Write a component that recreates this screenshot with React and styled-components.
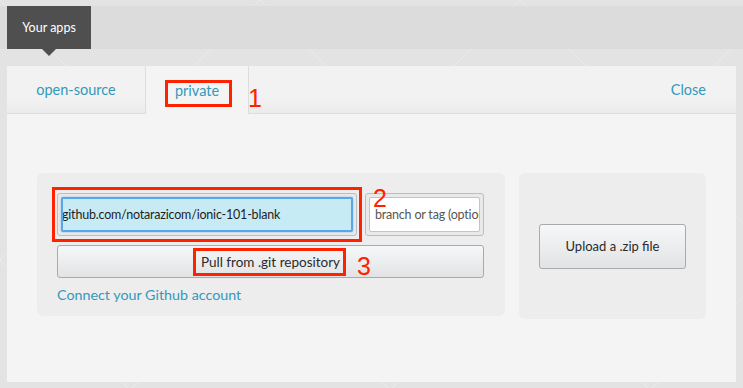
import styled, { createGlobalStyle } from "styled-components";

const GlobalStyle = createGlobalStyle`
  body {
    margin: 0;
    font-family: Lato, "Open Sans", sans-serif;
    background: #e3e3e3;
  }
`;

const Page = styled.div`
  position: relative;
  width: 743px;
  height: 388px;
  box-sizing: border-box;
  padding: 6px 7px 0;
  overflow: hidden;
  background:
    linear-gradient(135deg, transparent 49.8%, rgba(255,255,255,0.25) 50%, transparent 50.2%) 0 0 / 260px 260px,
    linear-gradient(45deg, transparent 49.8%, rgba(255,255,255,0.25) 50%, transparent 50.2%) 0 0 / 260px 260px,
    #e3e3e3;
`;

const Header = styled.div`
  height: 43px;
  background: #dcdcdc;
  display: flex;
  margin: 0 -7px;
  padding-left: 7px;
`;

const AppsTab = styled.div`
  position: relative;
  width: 84px;
  background: #4f4f4f;
  color: #fff;
  font-size: 12.5px;
  display: flex;
  align-items: center;
  justify-content: center;

  &::after {
    content: "";
    position: absolute;
    left: 35px;
    bottom: -7px;
    border-left: 7px solid transparent;
    border-right: 7px solid transparent;
    border-top: 7px solid #4f4f4f;
  }
`;

const Panel = styled.div`
  margin-top: 17px;
  height: 316px;
  background: #f4f4f4;
  display: flex;
  flex-direction: column;
`;

const TabBar = styled.div`
  height: 47px;
  display: flex;
  background: linear-gradient(#f2f2f2 70%, #ebebeb);
  border-bottom: 1px solid #dcdcdc;
`;

const Tab = styled.div`
  width: ${(p) => p.$w}px;
  display: flex;
  align-items: center;
  justify-content: center;
  color: #3399bb;
  font-size: 14.5px;
  border-right: 1px solid #dddddd;
  background: ${(p) => (p.$active ? "#f4f4f4" : "transparent")};
  margin-bottom: ${(p) => (p.$active ? "-1px" : "0")};
`;

const CloseLink = styled.div`
  margin-left: auto;
  padding-right: 30px;
  display: flex;
  align-items: center;
  color: #3399bb;
  font-size: 14.5px;
`;

const Body = styled.div`
  display: flex;
  gap: 14px;
  padding: 59px 30px 0;
  align-items: flex-start;
`;

const Card = styled.div`
  background: #ededed;
  border-radius: 6px;
  box-sizing: border-box;
  width: ${(p) => p.$w}px;
  height: ${(p) => p.$h}px;
`;

const GitCard = styled(Card)`
  padding: 20px 21px 0 20px;
  display: flex;
  flex-direction: column;
`;

const UploadCard = styled(Card)`
  display: flex;
  align-items: center;
  justify-content: center;
`;

const InputRow = styled.div`
  display: flex;
  gap: 8px;
`;

const InputFrame = styled.div`
  width: ${(p) => p.$w}px;
  height: 43px;
  box-sizing: border-box;
  border: 1px solid #bdbdbd;
  border-radius: 3px;
  background: #e9e9e9;
  padding: 3px;
`;

const TextBox = styled.div`
  height: 100%;
  box-sizing: border-box;
  border-radius: 2px;
  border: ${(p) => (p.$focus ? "2px solid #5aa6e6" : "1px solid #c4c4c4")};
  box-shadow: ${(p) => (p.$focus ? "0 0 2px #7ab8ee" : "none")};
  background: ${(p) => (p.$focus ? "#c7ebf5" : "#ffffff")};
  color: ${(p) => (p.$focus ? "#1e1e1e" : "#555")};
  font-size: 12.5px;
  letter-spacing: -0.2px;
  display: flex;
  align-items: center;
  overflow: hidden;
  white-space: nowrap;
  padding-left: ${(p) => (p.$focus ? "0" : "5px")};
`;

const Scrolled = styled.span`
  margin-left: -1px;
`;

const Button = styled.div`
  box-sizing: border-box;
  height: ${(p) => p.$h}px;
  width: ${(p) => (p.$w ? `${p.$w}px` : "auto")};
  border: 1px solid #aaaaaa;
  border-radius: 3px;
  background: linear-gradient(#f6f7f8, #e1e3e4);
  color: #2a2a2a;
  font-size: ${(p) => p.$fs}px;
  display: flex;
  align-items: center;
  justify-content: center;
`;

const PullButton = styled(Button)`
  margin-top: 9px;
`;

const GithubLink = styled.div`
  margin-top: 8px;
  color: #3399bb;
  font-size: 14.3px;
`;

const Mark = styled.div`
  position: absolute;
  left: ${(p) => p.$x}px;
  top: ${(p) => p.$y}px;
  width: ${(p) => p.$w}px;
  height: ${(p) => p.$h}px;
  box-sizing: border-box;
  border: 3px solid #ff2200;
`;

const Num = styled.div`
  position: absolute;
  left: ${(p) => p.$x}px;
  top: ${(p) => p.$y}px;
  color: #ff2200;
  font-family: "Liberation Sans", Arial, sans-serif;
  font-size: 25px;
  line-height: 1;
`;

export default function App() {
  return (
    <>
      <GlobalStyle />
      <Page>
        <Header>
          <AppsTab>Your apps</AppsTab>
        </Header>
        <Panel>
          <TabBar>
            <Tab $w={138}>open-source</Tab>
            <Tab $w={102} $active>private</Tab>
            <CloseLink>Close</CloseLink>
          </TabBar>
          <Body>
            <GitCard $w={468} $h={143}>
              <InputRow>
                <InputFrame $w={300}>
                  <TextBox $focus>
                    <Scrolled>github.com/notarazicom/ionic-101-blank</Scrolled>
                  </TextBox>
                </InputFrame>
                <InputFrame $w={119}>
                  <TextBox>branch or tag (optional)</TextBox>
                </InputFrame>
              </InputRow>
              <PullButton $h={33} $fs={13.5}>Pull from .git repository</PullButton>
              <GithubLink>Connect your Github account</GithubLink>
            </GitCard>
            <UploadCard $w={187} $h={146}>
              <Button $w={147} $h={45} $fs={13}>Upload a .zip file</Button>
            </UploadCard>
          </Body>
        </Panel>
        <Mark $x={165} $y={80} $w={67} $h={27} />
        <Num $x={248} $y={86}>1</Num>
        <Mark $x={52} $y={187} $w={310} $h={55} />
        <Num $x={373} $y={186}>2</Num>
        <Mark $x={193} $y={248} $w={153} $h={28} />
        <Num $x={357} $y={254}>3</Num>
      </Page>
    </>
  );
}
